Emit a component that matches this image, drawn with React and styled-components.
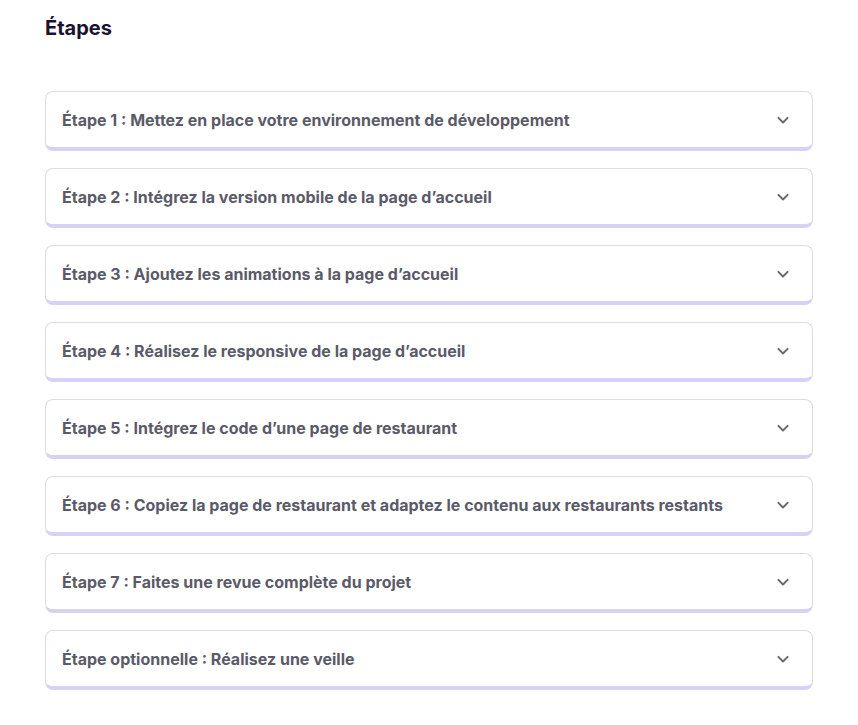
import React from "react";
import styled, { createGlobalStyle } from "styled-components";

const GlobalStyle = createGlobalStyle`
  body {
    margin: 0;
    background: #ffffff;
    font-family: Inter, "Noto Sans", sans-serif;
  }
`;

const steps = [
  "Étape 1 : Mettez en place votre environnement de développement",
  "Étape 2 : Intégrez la version mobile de la page d’accueil",
  "Étape 3 : Ajoutez les animations à la page d’accueil",
  "Étape 4 : Réalisez le responsive de la page d’accueil",
  "Étape 5 : Intégrez le code d’une page de restaurant",
  "Étape 6 : Copiez la page de restaurant et adaptez le contenu aux restaurants restants",
  "Étape 7 : Faites une revue complète du projet",
  "Étape optionnelle : Réalisez une veille",
];

function Chevron() {
  return (
    <svg width="20" height="20" viewBox="0 0 24 24" fill="none">
      <path
        d="M6.5 9.5l5.5 5.5 5.5-5.5"
        stroke="#6a6a6a"
        strokeWidth="2.4"
        strokeLinecap="round"
        strokeLinejoin="round"
      />
    </svg>
  );
}

export default function App() {
  return (
    <Page>
      <GlobalStyle />
      <Title>Étapes</Title>
      <List>
        {steps.map((label) => (
          <Step key={label}>
            <StepLabel>{label}</StepLabel>
            <Chevron />
          </Step>
        ))}
      </List>
    </Page>
  );
}

const Page = styled.div`
  width: 768px;
  padding: 16px 0 0 45px;
`;

const Title = styled.h2`
  margin: 0;
  font-size: 20px;
  line-height: 24px;
  font-weight: 700;
  color: #1d1130;
`;

const List = styled.div`
  display: flex;
  flex-direction: column;
  gap: 17px;
  margin-top: 51px;
`;

const Step = styled.button`
  box-sizing: border-box;
  display: flex;
  align-items: center;
  justify-content: space-between;
  width: 100%;
  height: 60px;
  padding: 0 19px 0 16px;
  background: #ffffff;
  border: 1px solid #dddddd;
  border-bottom: 4px solid #d8d1f6;
  border-radius: 8px;
  font-family: inherit;
  cursor: pointer;
  text-align: left;
`;

const StepLabel = styled.span`
  font-size: 16px;
  font-weight: 700;
  color: #5a5a68;
`;
